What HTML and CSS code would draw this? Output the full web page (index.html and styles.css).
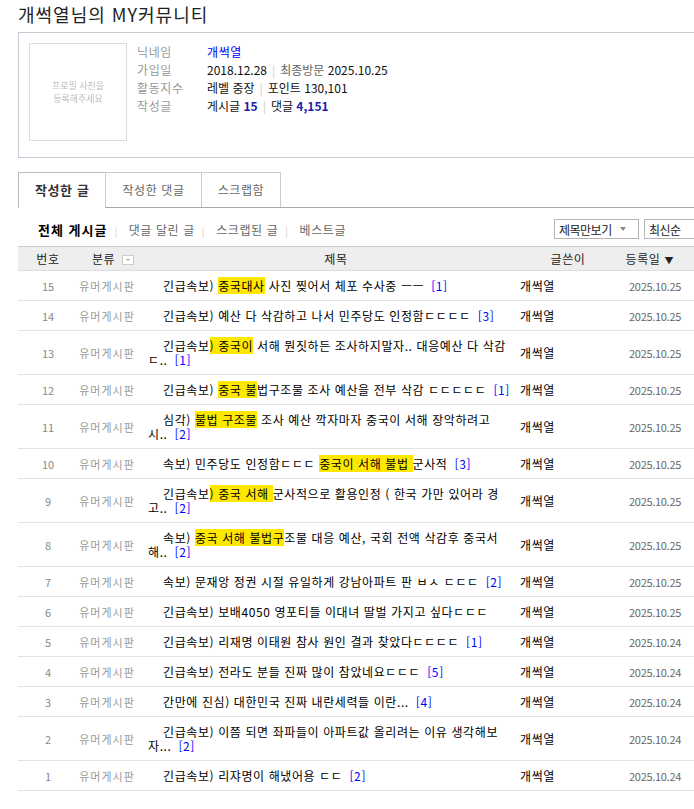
FILE: index.html
```html
<!DOCTYPE html>
<html lang="ko">
<head>
    <meta charset="UTF-8">
    <link rel="stylesheet" href="styles.css">
</head>
<body>
    <div class="wrap">
        <h1 class="page-title">개썩열님의 MY커뮤니티</h1>

        <div class="profile">
            <div class="photo">프로필 사진을<br>등록해주세요</div>
            <dl class="info">
                <dt>닉네임</dt>
                <dd class="nick">개썩열</dd>
                <dt>가입일</dt>
                <dd>2018.12.28<span class="bar">|</span><span class="sub">최종방문</span> 2025.10.25</dd>
                <dt>활동지수</dt>
                <dd>레벨 중장<span class="bar">|</span>포인트 130,101</dd>
                <dt>작성글</dt>
                <dd>게시글 <b class="num">15</b><span class="bar">|</span>댓글 <b class="num">4,151</b></dd>
            </dl>
        </div>

        <ul class="tabs">
            <li class="tab active">작성한 글</li>
            <li class="tab">작성한 댓글</li>
            <li class="tab">스크랩함</li>
        </ul>

        <div class="filter">
            <div class="filter-links">
                <a class="on">전체 게시글</a><span class="sep">|</span>
                <a>댓글 달린 글</a><span class="sep">|</span>
                <a>스크랩된 글</a><span class="sep">|</span>
                <a>베스트글</a>
            </div>
            <div class="filter-selects">
                <div class="select">제목만보기 <span class="caret"></span></div>
                <div class="select short">최신순</div>
            </div>
        </div>

        <table class="list">
            <colgroup>
                <col style="width:60px">
                <col style="width:62px">
                <col style="width:380px">
                <col style="width:96px">
                <col style="width:82px">
            </colgroup>
            <thead>
                <tr>
                    <th>번호</th>
                    <th class="th-cat">분류 <span class="mini-select"></span></th>
                    <th class="th-title">제목</th>
                    <th>글쓴이</th>
                    <th class="th-date">등록일 <span class="down">▼</span></th>
                </tr>
            </thead>
            <tbody>
                <tr>
                    <td class="no">15</td><td class="cat">유머게시판</td>
                    <td class="title">긴급속보) <mark>중국대사</mark> 사진 찢어서 체포 수사중 ㅡㅡ <span class="cmt">[1]</span></td>
                    <td class="writer">개썩열</td><td class="date">2025.10.25</td>
                </tr>
                <tr>
                    <td class="no">14</td><td class="cat">유머게시판</td>
                    <td class="title">긴급속보) 예산 다 삭감하고 나서 민주당도 인정함ㄷㄷㄷㄷ <span class="cmt">[3]</span></td>
                    <td class="writer">개썩열</td><td class="date">2025.10.25</td>
                </tr>
                <tr>
                    <td class="no">13</td><td class="cat">유머게시판</td>
                    <td class="title">긴급속보<mark>) 중국이</mark> 서해 뭔짓하든 조사하지말자.. 대응예산 다 삭감ㄷ.. <span class="cmt">[1]</span></td>
                    <td class="writer">개썩열</td><td class="date">2025.10.25</td>
                </tr>
                <tr>
                    <td class="no">12</td><td class="cat">유머게시판</td>
                    <td class="title">긴급속보) <mark>중국 불</mark>법구조물 조사 예산을 전부 삭감 ㄷㄷㄷㄷㄷ <span class="cmt">[1]</span></td>
                    <td class="writer">개썩열</td><td class="date">2025.10.25</td>
                </tr>
                <tr>
                    <td class="no">11</td><td class="cat">유머게시판</td>
                    <td class="title">심각) <mark>불법 구조물</mark> 조사 예산 깍자마자 중국이 서해 장악하려고 시.. <span class="cmt">[2]</span></td>
                    <td class="writer">개썩열</td><td class="date">2025.10.25</td>
                </tr>
                <tr>
                    <td class="no">10</td><td class="cat">유머게시판</td>
                    <td class="title">속보) 민주당도 인정함ㄷㄷㄷ <mark>중국이 서해 불법 </mark>군사적 <span class="cmt">[3]</span></td>
                    <td class="writer">개썩열</td><td class="date">2025.10.25</td>
                </tr>
                <tr>
                    <td class="no">9</td><td class="cat">유머게시판</td>
                    <td class="title">긴급속보<mark>) 중국 서해 </mark>군사적으로 활용인정 ( 한국 가만 있어라 경고.. <span class="cmt">[2]</span></td>
                    <td class="writer">개썩열</td><td class="date">2025.10.25</td>
                </tr>
                <tr>
                    <td class="no">8</td><td class="cat">유머게시판</td>
                    <td class="title">속보) <mark>중국 서해 불법구</mark>조물 대응 예산, 국회 전액 삭감후 중국서해.. <span class="cmt">[2]</span></td>
                    <td class="writer">개썩열</td><td class="date">2025.10.25</td>
                </tr>
                <tr>
                    <td class="no">7</td><td class="cat">유머게시판</td>
                    <td class="title">속보) 문재앙 정권 시절 유일하게 강남아파트 판 ㅂㅅ ㄷㄷㄷ <span class="cmt">[2]</span></td>
                    <td class="writer">개썩열</td><td class="date">2025.10.25</td>
                </tr>
                <tr>
                    <td class="no">6</td><td class="cat">유머게시판</td>
                    <td class="title">긴급속보) 보배4050 영포티들 이대녀 딸벌 가지고 싶다ㄷㄷㄷ</td>
                    <td class="writer">개썩열</td><td class="date">2025.10.25</td>
                </tr>
                <tr>
                    <td class="no">5</td><td class="cat">유머게시판</td>
                    <td class="title">긴급속보) 리재명 이태원 참사 원인 결과 찾았다ㄷㄷㄷㄷ <span class="cmt">[1]</span></td>
                    <td class="writer">개썩열</td><td class="date">2025.10.24</td>
                </tr>
                <tr>
                    <td class="no">4</td><td class="cat">유머게시판</td>
                    <td class="title">긴급속보) 전라도 분들 진짜 많이 참았네요ㄷㄷㄷ <span class="cmt">[5]</span></td>
                    <td class="writer">개썩열</td><td class="date">2025.10.24</td>
                </tr>
                <tr>
                    <td class="no">3</td><td class="cat">유머게시판</td>
                    <td class="title">간만에 진심) 대한민국 진짜 내란세력들 이란... <span class="cmt">[4]</span></td>
                    <td class="writer">개썩열</td><td class="date">2025.10.24</td>
                </tr>
                <tr>
                    <td class="no">2</td><td class="cat">유머게시판</td>
                    <td class="title">긴급속보) 이쯤 되면 좌파들이 아파트값 올리려는 이유 생각해보자... <span class="cmt">[2]</span></td>
                    <td class="writer">개썩열</td><td class="date">2025.10.24</td>
                </tr>
                <tr>
                    <td class="no">1</td><td class="cat">유머게시판</td>
                    <td class="title">긴급속보) 리쟈명이 해냈어용 ㄷㄷ <span class="cmt">[2]</span></td>
                    <td class="writer">개썩열</td><td class="date">2025.10.24</td>
                </tr>
            </tbody>
        </table>
    </div>
</body>
</html>
```

FILE: styles.css
```css
html {
    overflow: hidden;
}
body {
    margin: 0;
    font-family: "Noto Sans CJK KR", "Noto Sans", sans-serif;
    font-size: 12px;
    letter-spacing: 0.6px;
    color: #000;
    background: #fff;
}
.wrap {
    padding-left: 18px;
    width: 690px;
}
.page-title {
    margin: 0;
    padding-top: 3px;
    font-size: 18px;
    letter-spacing: 1px;
    font-weight: normal;
    line-height: 22px;
    color: #222;
    height: 29px;
}

/* profile box */
.profile {
    display: flex;
    width: 680px;
    height: 104px;
    padding: 10px;
    border: 1px solid #c9c9d6;
}
.photo {
    width: 96px;
    height: 96px;
    border: 1px solid #dcdcdc;
    display: flex;
    align-items: center;
    justify-content: center;
    text-align: center;
    font-size: 9px;
    line-height: 13.5px;
    letter-spacing: 0;
    color: #bbb;
    filter: blur(0.35px);
}
.info {
    display: grid;
    grid-template-columns: 70px auto;
    grid-auto-rows: 18px;
    align-content: start;
    margin: 0 0 0 10px;
    line-height: 18px;
}
.info dt {
    color: #999;
}
.info dd {
    margin: 0;
    color: #111;
    letter-spacing: 0;
}
.info .nick {
    color: #0000ff;
    letter-spacing: 0.6px;
}
.info .sub {
    color: #666;
}
.info .bar {
    color: #ccc;
    margin: 0 5px;
}
.info .num {
    color: #1d1dad;
}

/* tabs */
.tabs {
    display: flex;
    list-style: none;
    margin: 14px 0 0;
    padding: 0;
    width: 680px;
    border-bottom: 1px solid #aaa;
}
.tab {
    height: 34px;
    line-height: 34px;
    padding: 0 16px;
    border: 1px solid #ccc;
    border-bottom: none;
    margin-left: -1px;
    margin-bottom: -1px;
    color: #666;
    background: #fff;
}
.tab:first-child {
    margin-left: 0;
}
.tab.active {
    font-size: 13px;
    font-weight: bold;
    color: #333;
    padding-bottom: 1px;
    border-color: #bbb;
}

/* filter bar */
.filter {
    display: flex;
    justify-content: space-between;
    align-items: center;
    width: 680px;
    height: 20px;
    margin-top: 11px;
}
.filter-links {
    padding-left: 20px;
    color: #666;
}
.filter-links a.on {
    font-size: 13px;
    font-weight: bold;
    letter-spacing: 1px;
    color: #000;
}
.filter-links .sep {
    color: #d0d0d0;
    font-size: 10px;
    margin: 0 7px;
}
.filter-selects {
    display: flex;
    gap: 5px;
}
.select {
    box-sizing: border-box;
    width: 85px;
    height: 20px;
    padding: 0 4px;
    border: 1px solid #b5b5b5;
    font-size: 12px;
    letter-spacing: -0.5px;
    color: #222;
    display: flex;
    align-items: center;
    gap: 8px;
}
.select.short {
    width: 54px;
}
.caret {
    width: 0;
    height: 0;
    border-left: 3px solid transparent;
    border-right: 3px solid transparent;
    border-top: 4px solid #888;
}

/* post list */
.list {
    width: 680px;
    margin-top: 7px;
    border-collapse: collapse;
    table-layout: fixed;
}
.list th {
    height: 23px;
    padding: 0;
    font-weight: normal;
    color: #222;
    background: #eee;
    border-top: 1px solid #ccc;
    border-bottom: 1px solid #ddd;
}
.list .th-cat {
    padding-left: 8px;
}
.list .th-title {
    padding-left: 12px;
}
.list .th-date {
    text-align: right;
    padding-right: 24px;
}
.down {
    font-size: 9px;
}
.mini-select {
    display: inline-block;
    position: relative;
    width: 10px;
    height: 8px;
    margin-left: 3px;
    border: 1px solid #ccc;
    background: #fff;
    vertical-align: -1px;
}
.mini-select::after {
    content: "";
    position: absolute;
    left: 3px;
    top: 3px;
    border-left: 2px solid transparent;
    border-right: 2px solid transparent;
    border-top: 2px solid #999;
}
.list td {
    padding: 8px 0 7px;
    line-height: 14px;
    border-bottom: 1px solid #e2e2e2;
    vertical-align: middle;
}
.list .no {
    text-align: center;
    font-size: 11px;
    letter-spacing: 0;
    color: #888;
}
.list .cat {
    text-align: center;
    padding-right: 4px;
    font-size: 11px;
    letter-spacing: 1px;
    color: #999;
}
.list .title {
    padding-left: 8px;
    padding-right: 7px;
    text-indent: 15px;
}
.list .writer {
    color: #000;
}
.list .date {
    text-align: right;
    padding-right: 17px;
    font-size: 11px;
    letter-spacing: -0.3px;
    color: #666;
}
.cmt {
    color: #0000ff;
    margin-left: 3px;
}
mark {
    background: #ffe800;
    color: #000;
}
```
